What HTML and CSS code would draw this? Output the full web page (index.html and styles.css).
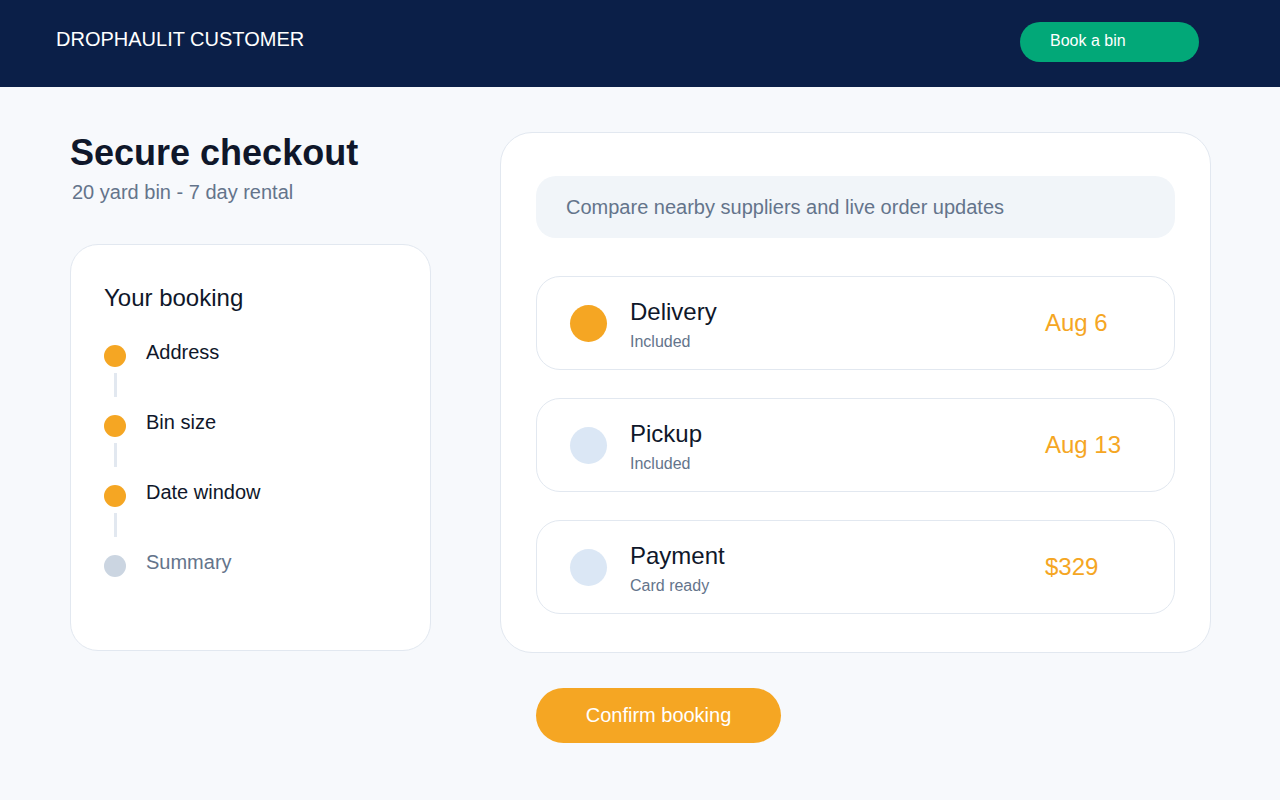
FILE: index.html
```html
<!DOCTYPE html>
<html lang="en">
<head>
<meta charset="utf-8">
<title>Drophaulit Customer - Secure checkout</title>
<link rel="stylesheet" href="styles.css">
</head>
<body>
<header class="topbar">
  <div class="brand">DROPHAULIT CUSTOMER</div>
  <a class="book-btn" href="#">Book a bin</a>
</header>
<main class="layout">
  <section class="left-col">
    <h1 class="page-title">Secure checkout</h1>
    <p class="page-sub">20 yard bin - 7 day rental</p>
    <div class="booking-card">
      <h2 class="booking-title">Your booking</h2>
      <ul class="steps">
        <li class="step done">
          <div class="step-rail"><span class="step-dot"></span><span class="step-line"></span></div>
          <span class="step-label">Address</span>
        </li>
        <li class="step done">
          <div class="step-rail"><span class="step-dot"></span><span class="step-line"></span></div>
          <span class="step-label">Bin size</span>
        </li>
        <li class="step done">
          <div class="step-rail"><span class="step-dot"></span><span class="step-line"></span></div>
          <span class="step-label">Date window</span>
        </li>
        <li class="step pending">
          <div class="step-rail"><span class="step-dot"></span></div>
          <span class="step-label">Summary</span>
        </li>
      </ul>
    </div>
  </section>
  <section class="right-col">
    <div class="summary-card">
      <div class="banner">Compare nearby suppliers and live order updates</div>
      <div class="line-item">
        <span class="item-dot active"></span>
        <div class="item-text">
          <div class="item-title">Delivery</div>
          <div class="item-sub">Included</div>
        </div>
        <div class="item-value">Aug 6</div>
      </div>
      <div class="line-item">
        <span class="item-dot"></span>
        <div class="item-text">
          <div class="item-title">Pickup</div>
          <div class="item-sub">Included</div>
        </div>
        <div class="item-value">Aug 13</div>
      </div>
      <div class="line-item">
        <span class="item-dot"></span>
        <div class="item-text">
          <div class="item-title">Payment</div>
          <div class="item-sub">Card ready</div>
        </div>
        <div class="item-value">$329</div>
      </div>
    </div>
    <button class="confirm-btn" type="button">Confirm booking</button>
  </section>
</main>
</body>
</html>
```

FILE: styles.css
```css
* {
  box-sizing: border-box;
}

html, body {
  margin: 0;
  padding: 0;
}

body {
  background: #f7f9fc;
  font-family: "Liberation Sans", Arial, sans-serif;
  color: #0f172a;
  min-height: 800px;
}

.topbar {
  height: 87px;
  background: #0b1f48;
  display: flex;
  justify-content: space-between;
  align-items: flex-start;
  padding: 0 81px 0 56px;
}

.brand {
  margin-top: 28px;
  color: #ffffff;
  font-size: 20px;
  line-height: 23px;
}

.book-btn {
  margin-top: 22px;
  width: 179px;
  height: 40px;
  border-radius: 20px;
  background: #02a878;
  color: #ffffff;
  font-size: 16px;
  line-height: 38px;
  padding-left: 30px;
  text-decoration: none;
}

.layout {
  display: flex;
  gap: 70px;
  padding: 45px 69px 0 70px;
}

.left-col {
  width: 360px;
  flex: none;
}

.page-title {
  margin: 0;
  font-size: 36px;
  line-height: 41px;
  font-weight: 700;
  color: #0f172a;
}

.page-sub {
  margin: 8px 0 0 2px;
  font-size: 20px;
  line-height: 23px;
  color: #64748b;
}

.booking-card {
  margin-top: 40px;
  width: 361px;
  height: 407px;
  background: #ffffff;
  border: 1px solid #e2e8f0;
  border-radius: 28px;
  padding: 39px 33px;
}

.booking-title {
  margin: 0;
  font-size: 24px;
  line-height: 28px;
  font-weight: 400;
  color: #0f172a;
}

.steps {
  list-style: none;
  margin: 29px 0 0 0;
  padding: 0;
}

.step {
  display: flex;
  align-items: flex-start;
  height: 70px;
}

.step.pending {
  height: 27px;
}

.step-rail {
  width: 22px;
  display: flex;
  flex-direction: column;
  align-items: center;
  flex: none;
}

.step-dot {
  margin-top: 4px;
  width: 22px;
  height: 22px;
  border-radius: 50%;
  background: #f5a623;
}

.step.pending .step-dot {
  background: #cbd5e1;
}

.step-line {
  margin-top: 6px;
  width: 3px;
  height: 24px;
  background: #e2e8f0;
}

.step-label {
  margin-left: 20px;
  font-size: 20px;
  line-height: 23px;
  color: #0f172a;
}

.step.pending .step-label {
  color: #64748b;
}

.right-col {
  width: 711px;
  flex: none;
}

.summary-card {
  height: 521px;
  background: #ffffff;
  border: 1px solid #e2e8f0;
  border-radius: 32px;
  padding: 43px 35px;
}

.banner {
  height: 62px;
  border-radius: 20px;
  background: #f1f5f9;
  padding-left: 30px;
  display: flex;
  align-items: center;
  font-size: 20px;
  color: #64748b;
}

.line-item {
  margin-top: 28px;
  height: 94px;
  border: 1px solid #e2e8f0;
  border-radius: 24px;
  display: flex;
  align-items: center;
  padding: 0 33px;
}

.banner + .line-item {
  margin-top: 38px;
}

.item-dot {
  width: 37px;
  height: 37px;
  border-radius: 50%;
  background: #dbe7f5;
  flex: none;
}

.item-dot.active {
  background: #f5a623;
}

.item-text {
  margin-left: 23px;
  flex: 1;
  padding-top: 2px;
}

.item-title {
  font-size: 24px;
  line-height: 28px;
  color: #0f172a;
}

.item-sub {
  margin-top: 7px;
  font-size: 16px;
  line-height: 18px;
  color: #64748b;
}

.item-value {
  width: 96px;
  font-size: 24px;
  line-height: 28px;
  color: #f5a623;
}

.confirm-btn {
  margin: 35px 0 0 36px;
  width: 245px;
  height: 55px;
  border: none;
  border-radius: 28px;
  background: #f5a623;
  color: #ffffff;
  font-family: "Liberation Sans", Arial, sans-serif;
  font-size: 20px;
  cursor: pointer;
}
```
